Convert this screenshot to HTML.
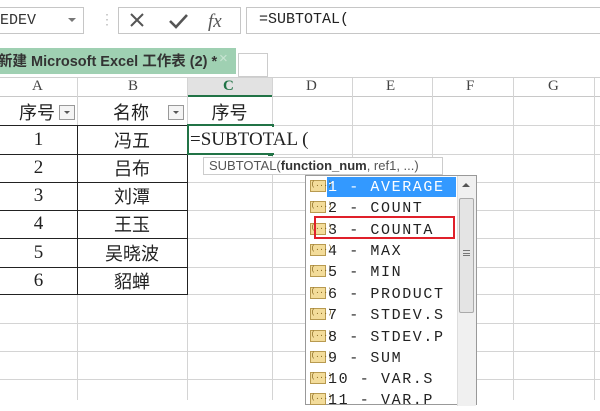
<!DOCTYPE html>
<html><head><meta charset="utf-8"><style>
*{margin:0;padding:0;box-sizing:border-box}
body{width:600px;height:400px;overflow:hidden;background:#fff;position:relative;font-family:"Liberation Serif","Noto Serif CJK SC",serif}
.a{position:absolute}
.mono{font-family:"Liberation Mono","Noto Sans CJK SC",monospace}
.ser{font-family:"Liberation Serif",serif}
.cjk{font-family:"Noto Sans CJK SC",sans-serif}
.hl{position:absolute;height:1px;background:#d4d4d4}
.vl{position:absolute;width:1px;background:#d4d4d4}
.bl{position:absolute;background:#222}
.cell{position:absolute;text-align:center;font-size:19px;color:#222;line-height:28px}
.it{position:absolute;left:308px;height:21px;width:148px;font-family:"Liberation Mono",monospace;font-size:15px;line-height:21px;color:#222;white-space:pre;letter-spacing:1.6px}
.ic{display:inline-block;width:16px;height:12px;background:#f3dc9a;border:1px solid #b89a50;vertical-align:middle;margin:0 2px 2px 2px;font-size:7px;line-height:9px;text-align:center;color:#7a5a10;letter-spacing:0}
</style></head><body>
<div class="a" style="left:-2px;top:7px;width:86px;height:27px;border:1px solid #c6c6c6"></div>
<div class="a mono" style="left:0;top:12px;font-size:15px;color:#333">EDEV</div>
<div class="a" style="left:68px;top:18px;width:0;height:0;border-left:4px solid transparent;border-right:4px solid transparent;border-top:4px solid #777"></div>
<div class="a" style="left:100px;top:12px;color:#bbb;font-size:14px">⋮</div>
<div class="a" style="left:118px;top:7px;width:123px;height:27px;border:1px solid #c6c6c6"></div>
<svg class="a" style="left:118px;top:7px" width="123" height="27"><path d="M13 7L25 19M25 7L13 19" stroke="#555" stroke-width="2" fill="none"/><path d="M52 14L58 20L69 8" stroke="#555" stroke-width="2.6" fill="none"/><text x="90" y="20" font-family="Liberation Serif" font-style="italic" font-size="19" fill="#555">fx</text></svg>
<div class="a" style="left:246px;top:7px;width:360px;height:27px;border:1px solid #c6c6c6"></div>
<div class="a mono" style="left:259px;top:11px;font-size:15px;color:#222">=SUBTOTAL(</div>
<div class="a" style="left:0;top:48px;width:236px;height:26px;background:#9fd0b2"></div>
<div class="a" style="left:-2px;top:50px;font-family:'Liberation Sans','Noto Sans CJK SC',sans-serif;font-weight:bold;font-size:14.5px;color:#333;white-space:nowrap">新建 Microsoft Excel 工作表 (2) *</div>
<div class="a" style="left:219px;top:50px;color:#c9e4d3;font-size:15px;font-family:'Liberation Sans'">×</div>
<div class="a" style="left:238px;top:53px;width:30px;height:24px;border:1px solid #ccc;background:#fff"></div>
<div class="a" style="left:0;top:77px;width:600px;height:20px;background:#fff;border-top:1px solid #d0d0d0;border-bottom:1px solid #c8c8c8"></div>
<div class="a" style="left:187px;top:78px;width:86px;height:19px;background:#e2e2e2;border-bottom:2px solid #217346"></div>
<div class="vl" style="left:77px;top:78px;height:19px"></div><div class="vl" style="left:187px;top:78px;height:19px"></div><div class="vl" style="left:272px;top:78px;height:19px"></div><div class="vl" style="left:352px;top:78px;height:322px"></div><div class="vl" style="left:432px;top:78px;height:322px"></div><div class="vl" style="left:513px;top:78px;height:322px"></div><div class="vl" style="left:594px;top:78px;height:322px"></div>
<div class="vl" style="left:272px;top:97px;height:303px"></div>
<div class="a ser" style="left:32px;top:78px;font-size:15px;color:#444">A</div>
<div class="a ser" style="left:128px;top:78px;font-size:15px;color:#444">B</div>
<div class="a ser" style="left:223px;top:78px;font-size:15px;color:#217346;font-weight:bold">C</div>
<div class="a ser" style="left:306px;top:78px;font-size:15px;color:#444">D</div>
<div class="a ser" style="left:386px;top:78px;font-size:15px;color:#444">E</div>
<div class="a ser" style="left:466px;top:78px;font-size:15px;color:#444">F</div>
<div class="a ser" style="left:548px;top:78px;font-size:15px;color:#444">G</div>
<div class="hl" style="left:187px;top:125px;width:413px"></div>
<div class="hl" style="left:187px;top:154px;width:413px"></div>
<div class="hl" style="left:187px;top:182px;width:413px"></div>
<div class="hl" style="left:187px;top:210px;width:413px"></div>
<div class="hl" style="left:187px;top:238px;width:413px"></div>
<div class="hl" style="left:187px;top:267px;width:413px"></div>
<div class="hl" style="left:187px;top:294px;width:413px"></div>
<div class="hl" style="left:0;top:323px;width:600px"></div>
<div class="hl" style="left:0;top:351px;width:600px"></div>
<div class="hl" style="left:0;top:379px;width:600px"></div>
<div class="vl" style="left:77px;top:294px;height:106px"></div><div class="vl" style="left:187px;top:294px;height:106px"></div>
<div class="bl" style="left:0;top:125px;width:187px;height:1px"></div>
<div class="bl" style="left:0;top:154px;width:187px;height:1px"></div>
<div class="bl" style="left:0;top:182px;width:187px;height:1px"></div>
<div class="bl" style="left:0;top:210px;width:187px;height:1px"></div>
<div class="bl" style="left:0;top:238px;width:187px;height:1px"></div>
<div class="bl" style="left:0;top:267px;width:187px;height:1px"></div>
<div class="bl" style="left:0;top:294px;width:187px;height:1px"></div>
<div class="bl" style="left:77px;top:125px;width:1px;height:170px"></div>
<div class="bl" style="left:187px;top:125px;width:1px;height:170px"></div>
<div class="vl" style="left:77px;top:97px;height:28px"></div><div class="vl" style="left:187px;top:97px;height:28px"></div>
<div class="cell cjk" style="left:12px;top:98px;width:50px;font-size:18px">序号</div>
<div class="a" style="left:59px;top:105px;width:16px;height:15px;border:1px solid #999;background:#f4f4f4"></div>
<div class="a" style="left:64px;top:111px;border-left:3px solid transparent;border-right:3px solid transparent;border-top:3px solid #555"></div>
<div class="cell cjk" style="left:106px;top:98px;width:50px;font-size:18px">名称</div>
<div class="a" style="left:168px;top:105px;width:16px;height:15px;border:1px solid #999;background:#f4f4f4"></div>
<div class="a" style="left:173px;top:111px;border-left:3px solid transparent;border-right:3px solid transparent;border-top:3px solid #555"></div>
<div class="cell cjk" style="left:187px;top:98px;width:85px;font-size:18px">序号</div>
<div class="cell" style="left:0;top:126px;width:77px">1</div>
<div class="cell" style="left:0;top:154px;width:77px">2</div>
<div class="cell" style="left:0;top:182px;width:77px">3</div>
<div class="cell" style="left:0;top:210px;width:77px">4</div>
<div class="cell" style="left:0;top:239px;width:77px">5</div>
<div class="cell" style="left:0;top:267px;width:77px">6</div>
<div class="cell cjk" style="left:77px;top:126px;width:110px;font-size:18px">冯五</div>
<div class="cell cjk" style="left:77px;top:154px;width:110px;font-size:18px">吕布</div>
<div class="cell cjk" style="left:77px;top:182px;width:110px;font-size:18px">刘潭</div>
<div class="cell cjk" style="left:77px;top:210px;width:110px;font-size:18px">王玉</div>
<div class="cell cjk" style="left:77px;top:239px;width:110px;font-size:18px">吴晓波</div>
<div class="cell cjk" style="left:77px;top:267px;width:110px;font-size:18px">貂蝉</div>
<div class="a" style="left:187px;top:124px;width:87px;height:31px;border:2px solid #217346"></div>
<div class="a" style="left:268px;top:151px;width:5px;height:5px;background:#217346"></div>
<div class="a" style="left:190px;top:127px;width:120px;height:26px;font-family:'Liberation Serif',serif;font-size:19px;line-height:26px;color:#222;background:#fff">=SUBTOTAL (</div>
<div class="a" style="left:203px;top:157px;width:240px;height:18px;border:1px solid #ccc;background:#fff;font-family:'Liberation Sans',sans-serif;font-size:13px;line-height:16px;color:#555;padding-left:5px;white-space:nowrap">SUBTOTAL(<b style="color:#333">function_num</b>, ref1, ...)</div>
<div class="a" style="left:305px;top:175px;width:172px;height:230px;border:1px solid #999;background:#fff"></div>
<div class="a" style="left:327px;top:177px;width:129px;height:20px;background:#3399ff"></div>
<div class="a" style="left:457px;top:176px;width:19px;height:230px;background:#f0f0f0;border-left:1px solid #ddd"></div>
<div class="a" style="left:462px;top:183px;border-left:4px solid transparent;border-right:4px solid transparent;border-bottom:4px solid #555"></div>
<div class="a" style="left:459px;top:198px;width:15px;height:115px;background:#e4e4e4;border:1px solid #aaa;border-radius:2px"></div>
<div class="a" style="left:463px;top:250px;width:7px;height:6px;border-top:1px solid #777;border-bottom:1px solid #777"></div>
<div class="a" style="left:463px;top:253px;width:7px;height:1px;background:#777"></div>
<div class="it" style="top:177px"><span class="ic">(...)</span><span style="color:#fff">1 - AVERAGE</span></div>
<div class="it" style="top:198px"><span class="ic">(...)</span>2 - COUNT</div>
<div class="it" style="top:220px"><span class="ic">(...)</span>3 - COUNTA</div>
<div class="it" style="top:241px"><span class="ic">(...)</span>4 - MAX</div>
<div class="it" style="top:262px"><span class="ic">(...)</span>5 - MIN</div>
<div class="it" style="top:284px"><span class="ic">(...)</span>6 - PRODUCT</div>
<div class="it" style="top:305px"><span class="ic">(...)</span>7 - STDEV.S</div>
<div class="it" style="top:327px"><span class="ic">(...)</span>8 - STDEV.P</div>
<div class="it" style="top:348px"><span class="ic">(...)</span>9 - SUM</div>
<div class="it" style="top:369px"><span class="ic">(...)</span>10 - VAR.S</div>
<div class="it" style="top:390px"><span class="ic">(...)</span>11 - VAR.P</div>
<div class="a" style="left:314px;top:216px;width:141px;height:23px;border:2px solid #e0202a"></div>
</body></html>
